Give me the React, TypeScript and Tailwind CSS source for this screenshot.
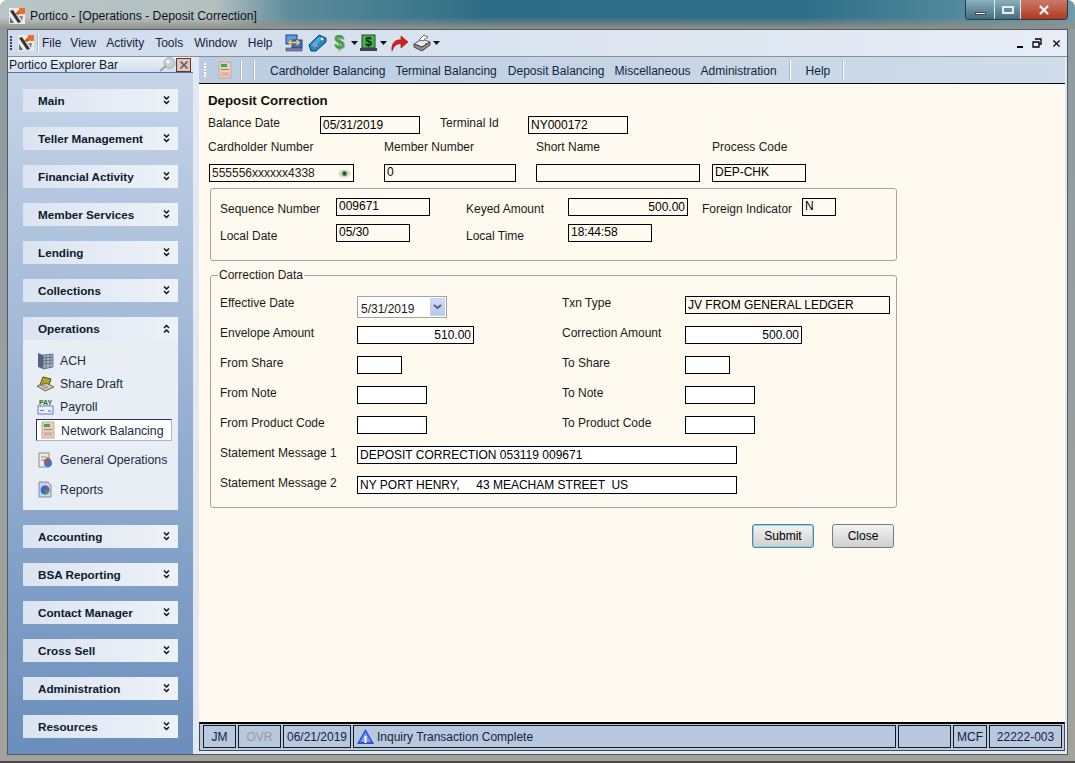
import { ReactNode } from "react";
import { X } from "lucide-react";

const font = "font-['Liberation_Sans',Arial,sans-serif]";

const Logo = ({ size = 16 }: { size?: number }) => (
  <svg width={size} height={size} viewBox="0 0 16 16">
    <rect width="16" height="16" fill="#eeeae6" />
    <rect x="10" y="0" width="6" height="6" fill="#e8702a" />
    <path d="M6 6l4-4v5z" fill="#d9541e" />
    <path d="M1 3l3-1 8 12-3 1z" fill="#33343c" />
    <path d="M1 9l4 6H1z" fill="#5d6a80" />
    <path d="M10 8l3 5 1-5z" fill="#7e8794" />
  </svg>
);

const Sep = () => <div className="w-[2px] h-[20px] bg-white border-l border-[#a9b9cf]" />;

const Grip = ({ light }: { light?: boolean }) => (
  <div className="flex flex-col gap-[1px] w-[3px]">
    {[0, 1, 2, 3, 4].map((i) => (
      <div key={i} className={light ? "w-[2px] h-[2px] bg-white" : "w-[2px] h-[2px] bg-[#27416f]"} />
    ))}
  </div>
);

const Caret = ({ className }: { className: string }) => (
  <svg width="7" height="4" viewBox="0 0 7 4" className={className}><path d="M0 0h7L3.500 4z" fill="#111" /></svg>
);

const ToolbarIcons = () => (
  <div className="flex items-center ml-[12px] h-full">
    <svg width="18" height="18" viewBox="0 0 18 18" className="mr-[5px]">
      <rect x="1" y="1" width="11" height="9" fill="#5a9ae6" stroke="#2a3f7c" />
      <rect x="7" y="6" width="10" height="8" fill="#3c6fd0" stroke="#2a3f7c" />
      <rect x="1" y="14" width="16" height="3" fill="#7c7fb0" stroke="#3d4272" strokeWidth="0.6" />
      <path d="M4 8.500h10M6.500 6L4 8.500 6.500 11M11.500 6L14 8.500 11.500 11" stroke="#f6d23a" strokeWidth="1.500" fill="none" />
    </svg>
    <svg width="19" height="18" viewBox="0 0 19 18" className="mr-[5px]">
      <path d="M1 11L11 1l7 3 0 4-10 9-5 0z" fill="#1d8fc0" stroke="#123b66" />
      <path d="M3 11L11 3l4 1-9 9z" fill="#35b9d8" />
      <circle cx="14" cy="5" r="1.800" fill="#eef5f8" stroke="#446" strokeWidth="0.5" />
      <rect x="6" y="9" width="3.500" height="3.500" fill="#dd77b8" transform="rotate(-40 8 11)" />
    </svg>
    <svg width="14" height="20" viewBox="0 0 14 20">
      <text x="8" y="16" textAnchor="middle" fontSize="18" fontWeight="bold" fill="#8e9a90" fontFamily="Liberation Sans">$</text>
      <text x="7" y="15" textAnchor="middle" fontSize="18" fontWeight="bold" fill="#3fa33a" fontFamily="Liberation Sans">$</text>
    </svg>
    <Caret className="ml-[5px] mr-[2px]" />
    <svg width="17" height="18" viewBox="0 0 17 18">
      <rect x="2" y="1" width="13" height="13" fill="#46b056" stroke="#1c4d22" />
      <rect x="0" y="14" width="17" height="3" fill="#3b4250" />
      <text x="8.500" y="12" textAnchor="middle" fontSize="12" fontWeight="bold" fill="#0c240f" fontFamily="Liberation Sans">$</text>
    </svg>
    <Caret className="ml-[3px] mr-[4px]" />
    <svg width="18" height="18" viewBox="0 0 18 18" className="mr-[4px]">
      <path d="M1 17C0 9 5 5 10 6V2l7 6-7 6v-4C6 9 3 12 1 17z" fill="#d3201b" stroke="#8a100c" strokeWidth="0.6" />
    </svg>
    <svg width="18" height="18" viewBox="0 0 18 18">
      <path d="M1 10l8-5 8 3-8 5z" fill="#ececec" stroke="#555" />
      <path d="M1 10v3l8 4 8-6V8l-8 5z" fill="#8f8f8f" stroke="#444" />
      <path d="M6 6l5-5 4 2-5 4z" fill="#fff" stroke="#666" />
      <rect x="12" y="9" width="2" height="1" fill="#d44" />
    </svg>
    <Caret className="ml-[2px]" />
  </div>
);

const Chevrons = ({ up }: { up?: boolean }) => (
  <svg width="7" height="9" viewBox="0 0 7 9" className={up ? "rotate-180" : ""}>
    <path d="M1 0.500l2.500 2.500L6 0.500M1 5l2.500 2.500L6 5" stroke="#111" strokeWidth="1.500" fill="none" />
  </svg>
);

const Group = ({ name, open, children }: { name: string; open?: boolean; children?: ReactNode }) => (
  <div className="mb-[15px]">
    <div className="h-[23px] flex items-center justify-between pl-[15px] pr-[8px] bg-gradient-to-r from-[#dbe4f1] to-[#eef2f8]">
      <span className="text-[11.700px] font-bold text-[#0d1a2c] mt-[1px]">{name}</span>
      <Chevrons up={open} />
    </div>
    {children}
  </div>
);

const NavItem = ({ icon, label, className }: { icon: ReactNode; label: string; className: string }) => (
  <div className={"flex items-center text-[12.300px] text-[#1a2a44] whitespace-nowrap " + className}>
    <span className="w-[18px] h-[18px] flex items-center justify-center mr-[6px]">{icon}</span>
    <span className="mt-[2px]">{label}</span>
  </div>
);

const TermIcon = () => (
  <svg width="14" height="18" viewBox="0 0 14 18">
    <rect x="1" y="1" width="12" height="16" fill="#eccdbd" stroke="#c3a797" />
    <rect x="3" y="3" width="6" height="3" fill="#32b04a" />
    <rect x="3" y="8" width="8" height="1" fill="#9a8478" />
    <rect x="3" y="11" width="8" height="4" fill="#d8b4a2" />
  </svg>
);

const OperationsBody = () => (
  <div className="h-[170px] bg-[#e9eef4] pt-[10px] pl-[13px] flex flex-col">
    <NavItem className="h-[21px] mb-[2px]" label="ACH" icon={
      <svg width="17" height="18" viewBox="0 0 17 18">
        <path d="M1 1l5 2v14l-5-2z" fill="#55647e" />
        <path d="M6 3l10-1v13l-10 2z" fill="#a9b6c8" stroke="#4b5a74" strokeWidth="0.7" />
        <path d="M6 6l10-1M6 9l10-1M6 12l10-1M9 3v14M13 2v14" stroke="#4b5a74" strokeWidth="0.7" />
      </svg>
    } />
    <NavItem className="h-[21px] mb-[2px]" label="Share Draft" icon={
      <svg width="17" height="17" viewBox="0 0 17 17">
        <path d="M3 10l3-8 8 2-2 6z" fill="#b7a520" stroke="#5a4d10" />
        <path d="M0 11l9-3 8 4-9 4z" fill="#cfcbb0" stroke="#666" />
        <path d="M4 11l5-1M6 13l5-1" stroke="#777" strokeWidth="0.8" />
      </svg>
    } />
    <NavItem className="h-[21px]" label="Payroll" icon={
      <svg width="17" height="17" viewBox="0 0 17 17">
        <text x="8.500" y="6.500" textAnchor="middle" fontSize="7" fontWeight="bold" fill="#1c6b2c" fontFamily="Liberation Sans">PAY</text>
        <rect x="1" y="8" width="15" height="8" fill="#eef" stroke="#6d74c8" />
        <rect x="3" y="12" width="4" height="1" fill="#6d74c8" />
        <rect x="11" y="12" width="3" height="2" fill="#9aa0dd" />
      </svg>
    } />
    <div className="w-[136px] h-[22px] mt-[2px] bg-white border border-[#23324e] border-r-[#a9b5d8] border-b-[#a9b5d8] flex items-center whitespace-nowrap">
      <span className="w-[14px] ml-[4px] mr-[6px] flex"><TermIcon /></span>
      <span className="text-[12.300px] text-[#1a2a44] mt-[2px]">Network Balancing</span>
    </div>
    <NavItem className="h-[21px] mt-[8px]" label="General Operations" icon={
      <svg width="17" height="18" viewBox="0 0 17 18">
        <path d="M2 2h10v14H2z" fill="#e8eef2" stroke="#8a8a8a" />
        <path d="M4 6h6M4 9h3" stroke="#8a8a8a" />
        <circle cx="11" cy="12" r="4" fill="#3d78c8" />
        <path d="M6 10l5-4 3 3-5 2z" fill="#c8502a" />
      </svg>
    } />
    <NavItem className="h-[21px] mt-[9px]" label="Reports" icon={
      <svg width="14" height="17" viewBox="0 0 14 17">
        <path d="M1 1h9l3 3v12H1z" fill="#c9d6e8" stroke="#7f8ea8" />
        <circle cx="7" cy="9" r="4.500" fill="#2f6fc4" />
        <path d="M7 9V4.500A4.500 4.500 0 0 1 11.500 9z" fill="#a23fa8" />
        <path d="M7 9l4.500 0A4.500 4.500 0 0 1 7 13.500z" fill="#43a047" />
      </svg>
    } />
  </div>
);

const Sidebar = () => (
  <div className="w-[185px] flex flex-col">
    <div className="h-[17px] -mb-[1px] flex items-center justify-between bg-gradient-to-b from-[#eef2f8] to-[#d3deec] border-b-2 border-b-[#4f79ad] pl-[1px] pr-[2px] text-[12.200px] text-[#0d1a2c]">
      <span className="mt-[2px]">Portico Explorer Bar</span>
      <span className="flex items-center">
        <svg width="17" height="15" viewBox="0 0 17 15">
          <circle cx="10.500" cy="6" r="5.500" fill="#c9cdd2" stroke="#8e9399" strokeWidth="0.6" />
          <circle cx="9" cy="4.500" r="2" fill="#eef0f2" />
          <path d="M1 14l6-5" stroke="#9a9ea3" strokeWidth="1.800" />
        </svg>
        <span className="w-[15px] h-[14px] bg-[#d8c9c6] border border-[#7a2a24] flex items-center justify-center">
          <X size={12} strokeWidth={3.500} color="#6d5c5a" />
        </span>
      </span>
    </div>
    <div className="flex-1 bg-gradient-to-b from-[#c6d4e8] to-[#6a8ebb] pl-[15px] pr-[15px] pt-[16px]">
      <Group name="Main" />
      <Group name="Teller Management" />
      <Group name="Financial Activity" />
      <Group name="Member Services" />
      <Group name="Lending" />
      <Group name="Collections" />
      <Group name="Operations" open><OperationsBody /></Group>
      <Group name="Accounting" />
      <Group name="BSA Reporting" />
      <Group name="Contact Manager" />
      <Group name="Cross Sell" />
      <Group name="Administration" />
      <Group name="Resources" />
    </div>
  </div>
);

const Input = ({ w, v, right, raised }: { w: string; v?: string; right?: boolean; raised?: boolean }) => (
  <div className={"h-[18px] border border-black bg-[#fffaef] flex items-center px-[2px] text-[12px] text-black whitespace-pre " + w + (right ? " justify-end" : "") + (raised ? " pb-[2px]" : "")}>
    {v}
  </div>
);

const WhiteInput = ({ w, v, right }: { w: string; v?: string; right?: boolean }) => (
  <div className={"h-[18px] border border-black bg-white flex items-center px-[2px] text-[12px] text-black whitespace-pre " + w + (right ? " justify-end" : "")}>
    {v}
  </div>
);

const PairRow = ({ left, leftField, right, rightField }: { left: string; leftField: ReactNode; right: string; rightField: ReactNode }) => (
  <div className="flex items-center h-[18px] mb-[12px]">
    <div className="w-[342px] flex items-center">
      <span className="w-[137px] -mt-[5px]">{left}</span>
      {leftField}
    </div>
    <span className="w-[123px] -mt-[5px]">{right}</span>
    {rightField}
  </div>
);

const DepositForm = () => (
  <div className="flex-1 bg-[#fffaef] pl-[9px] pt-[9px] text-[12px] text-[#1a1a1a]">
    <div className="text-[13.300px] font-bold text-[#111] h-[16px] leading-[16px]">Deposit Correction</div>

    <div className="flex items-center h-[18px] mt-[7px]">
      <span className="w-[112px] -mt-[4px]">Balance Date</span>
      <Input w="w-[100px]" v="05/31/2019" />
      <span className="ml-[20px] w-[88px] -mt-[4px]">Terminal Id</span>
      <Input w="w-[100px]" v="NY000172" />
    </div>

    <div className="flex h-[14px] items-center mt-[6px]">
      <span className="w-[176px]">Cardholder Number</span>
      <span className="w-[152px]">Member Number</span>
      <span className="w-[176px]">Short Name</span>
      <span>Process Code</span>
    </div>

    <div className="flex items-center h-[18px] mt-[10px] pl-[1px]">
      <div className="w-[145px] h-[18px] border border-black flex items-center justify-between pl-[2px] pr-[2px] mr-[30px]">
        <span>555556xxxxxx4338</span>
        <svg width="13" height="9" viewBox="0 0 13 9">
          <ellipse cx="6.500" cy="4.500" rx="6" ry="4" fill="#d8d8cc" />
          <circle cx="6.500" cy="4.500" r="2.500" fill="#3d8a3a" />
          <circle cx="6.500" cy="4.500" r="1" fill="#123" />
        </svg>
      </div>
      <Input w="w-[132px] mr-[20px]" v="0" raised />
      <Input w="w-[164px] mr-[12px]" />
      <Input w="w-[94px]" v="DEP-CHK" raised />
    </div>

    <div className="ml-[2px] mt-[6px] w-[687px] h-[73px] border border-[#a3a3a3] rounded-[3px] pl-[9px] pt-[9px]">
      <div className="flex items-center h-[18px]">
        <span className="w-[116px] mt-[4px]">Sequence Number</span>
        <Input w="w-[94px]" v="009671" raised />
        <span className="ml-[36px] w-[102px] mt-[4px]">Keyed Amount</span>
        <Input w="w-[120px]" v="500.00" right />
        <span className="ml-[14px] w-[100px] mt-[4px]">Foreign Indicator</span>
        <Input w="w-[34px]" v="N" raised />
      </div>
      <div className="flex items-center h-[18px] mt-[8px]">
        <span className="w-[116px] mt-[6px]">Local Date</span>
        <Input w="w-[74px]" v="05/30" raised />
        <span className="ml-[56px] w-[102px] mt-[6px]">Local Time</span>
        <Input w="w-[84px]" v="18:44:58" raised />
      </div>
    </div>

    <div className="ml-[2px] mt-[14px] w-[687px] h-[233px] border border-[#a3a3a3] rounded-[3px] pl-[9px] pt-[20px] relative">
      <span className="absolute -top-[8px] left-[7px] bg-[#fffaef] px-[1px] leading-[14px]">Correction Data</span>
      <div className="flex items-center h-[18px] mb-[12px]">
        <div className="w-[342px] flex items-center">
          <span className="w-[137px] -mt-[5px]">Effective Date</span>
          <div className="w-[90px] h-[22px] mt-[4px] border border-[#a3a3a3] bg-white flex items-center justify-between pl-[3px] pr-[1px]">
            <span className="mt-[3px]">5/31/2019</span>
            <span className="w-[15px] h-[18px] bg-gradient-to-b from-[#cfdcf5] to-[#b4c8ef] border border-[#c6d3ee] flex items-center justify-center">
              <svg width="9" height="6" viewBox="0 0 9 6"><path d="M1 1l3.500 3L8 1" stroke="#4d5f86" strokeWidth="2" fill="none" /></svg>
            </span>
          </div>
        </div>
        <span className="w-[123px] -mt-[5px]">Txn Type</span>
        <Input w="w-[205px]" v="JV FROM GENERAL LEDGER" />
      </div>
      <PairRow left="Envelope Amount" leftField={<WhiteInput w="w-[117px]" v="510.00" right />} right="Correction Amount" rightField={<WhiteInput w="w-[117px]" v="500.00" right />} />
      <PairRow left="From Share" leftField={<WhiteInput w="w-[45px]" />} right="To Share" rightField={<WhiteInput w="w-[45px]" />} />
      <PairRow left="From Note" leftField={<WhiteInput w="w-[70px]" />} right="To Note" rightField={<WhiteInput w="w-[70px]" />} />
      <PairRow left="From Product Code" leftField={<WhiteInput w="w-[70px]" />} right="To Product Code" rightField={<WhiteInput w="w-[70px]" />} />
      <div className="flex items-center h-[18px] mb-[12px]">
        <span className="w-[137px] -mt-[5px]">Statement Message 1</span>
        <WhiteInput w="w-[380px]" v="DEPOSIT CORRECTION 053119 009671" />
      </div>
      <div className="flex items-center h-[18px]">
        <span className="w-[137px] -mt-[5px]">Statement Message 2</span>
        <WhiteInput w="w-[380px]" v="NY PORT HENRY,     43 MEACHAM STREET  US" />
      </div>
    </div>

    <div className="flex mt-[16px] ml-[544px] gap-[18px]">
      <button className="w-[62px] h-[24px] rounded-[3px] border border-[#5f7f8c] shadow-[inset_0_0_0_1px_#7fdcf5] bg-gradient-to-b from-[#f3f3f3] to-[#cfcfcf] text-[12px] text-black">Submit</button>
      <button className="w-[62px] h-[24px] rounded-[3px] border border-[#7a7a7a] bg-gradient-to-b from-[#f3f3f3] to-[#cfcfcf] text-[12px] text-black">Close</button>
    </div>
  </div>
);

const Cell = ({ w, v, muted }: { w: string; v?: string; muted?: boolean }) => (
  <div className={"h-[23px] border border-[#1a1a1a] flex items-center justify-center text-[12px] " + w + (muted ? " text-[#9a9a9a]" : " text-[#14233c]")}>
    {v}
  </div>
);

const StatusBar = () => (
  <div className="h-[29px] mb-[3px] bg-[#b8c9df] border border-[#3a4a5c] border-t-2 border-t-black pl-[3px] pt-[1px] flex items-start gap-[2px]">
    <Cell w="w-[33px]" v="JM" />
    <Cell w="w-[43px]" v="OVR" muted />
    <Cell w="w-[68px]" v="06/21/2019" />
    <div className="h-[23px] w-[543px] border border-[#1a1a1a] flex items-center pl-[3px] text-[12px] text-[#14233c]">
      <svg width="17" height="16" viewBox="0 0 17 16" className="mr-[3px]">
        <path d="M8.500 0L17 15H0z" fill="#2f4fd0" />
        <path d="M8.500 3L14 13H3z" fill="#7f9af5" />
        <rect x="7.500" y="7" width="2" height="7" fill="#fff" />
      </svg>
      Inquiry Transaction Complete
    </div>
    <Cell w="w-[53px]" />
    <Cell w="w-[34px]" v="MCF" />
    <Cell w="w-[73px]" v="22222-003" />
  </div>
);

export default function App() {
  return (
    <div className={"w-[1075px] h-[763px] overflow-hidden flex flex-col rounded-t-[8px] bg-gradient-to-b from-[#8e9ba0] to-[#a3a29c] border-b-2 border-[#4a4a4a] " + font}>
      <div className="h-[29px] bg-[linear-gradient(to_right,#b7c5c8_0%,#b3c0c0_20%,#5d8c9c_27%,#2f6d86_45%,#2f6f88_75%,#6d9cab_100%)]">
        <div className="h-full flex items-start pl-[9px] pr-[7px] bg-gradient-to-b from-transparent from-60% to-[#938f88]">
          <div className="mt-[7px] flex items-center">
            <Logo />
            <span className="ml-[5px] text-[12.200px] text-[#111]">Portico - [Operations - Deposit Correction]</span>
          </div>
          <div className="ml-auto flex h-[20px] border border-t-0 border-[#2a3a44] rounded-b-[4px] overflow-hidden">
            <div className="w-[29px] flex items-end justify-center pb-[4px] bg-gradient-to-b from-[#8eb0bd] to-[#3f6f80] border-r border-[#dfe8ec]">
              <div className="w-[11px] h-[3px] bg-white border border-[#445]" />
            </div>
            <div className="w-[26px] flex items-center justify-center bg-gradient-to-b from-[#8eb0bd] to-[#3f6f80] border-r border-[#dfe8ec]">
              <div className="w-[12px] h-[8px] border-2 border-[#e6edf0] bg-[#6b8d9b]" />
            </div>
            <div className="w-[46px] flex items-center justify-center bg-gradient-to-b from-[#c87a6a] to-[#b0361b]">
              <X size={14} strokeWidth={4} color="#f2f2f2" />
            </div>
          </div>
        </div>
      </div>

      <div className="flex-1 mx-[7px] mb-[6px] flex flex-col min-h-0 border border-[#4e5a64] bg-[#e3e9f2]">
        <div className="h-[27px] flex items-center bg-gradient-to-r from-[#cfdbec] to-[#e7edf6] pl-[2px] pr-[5px] text-[12px] text-[#14233c] border-b border-[#8a8f96]">
          <Grip />
          <span className="ml-[5px] mr-[3px]"><Logo size={16} /></span>
          <Sep />
          <div className="flex ml-[3px] gap-[9px]">
            <span>File</span><span>View</span><span className="ml-[1px]">Activity</span><span className="ml-[2px]">Tools</span><span className="ml-[2px]">Window</span><span className="ml-[2px]">Help</span>
          </div>
          <ToolbarIcons />
          <div className="ml-auto flex items-center gap-[9px] text-black">
            <div className="w-[6px] h-[2px] bg-black mt-[8px]" />
            <svg width="10" height="10" viewBox="0 0 10 10"><path d="M3 1h6v5H7M1 4h6v5H1z" stroke="#000" strokeWidth="1.300" fill="none" /></svg>
            <X size={11} strokeWidth={2.500} />
          </div>
        </div>

        <div className="flex-1 flex min-h-0">
          <Sidebar />
          <div className="w-[6px]" />
          <div className="flex-1 flex flex-col min-w-0 mr-[2px]">
            <div className="h-[27px] flex items-center bg-gradient-to-r from-[#bccde2] to-[#d0dce9] border-b border-black pl-[5px] text-[12px] text-[#14233c]">
              <Grip light />
              <span className="ml-[11px] mr-[8px]"><TermIcon /></span>
              <Sep /><span className="w-[11px]" /><Sep />
              <div className="flex ml-[15px] gap-[10px] mt-[1px]">
                <span>Cardholder Balancing</span><span>Terminal Balancing</span><span className="ml-[1px]">Deposit Balancing</span><span>Miscellaneous</span><span>Administration</span>
              </div>
              <span className="w-[12px]" /><Sep />
              <span className="ml-[15px] mt-[1px]">Help</span>
              <span className="w-[12px]" /><Sep />
            </div>
            <DepositForm />
            <StatusBar />
          </div>
        </div>
      </div>
    </div>
  );
}
